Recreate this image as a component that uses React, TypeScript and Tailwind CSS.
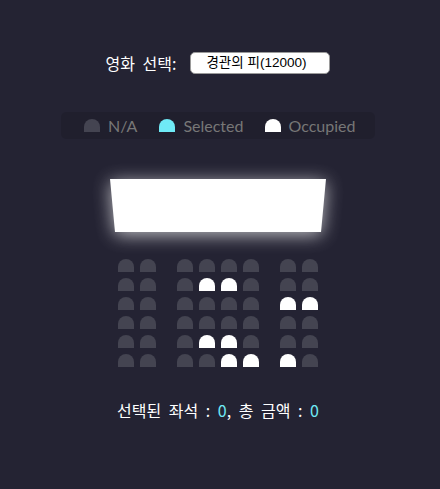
import { useState } from "react";

type SeatState = "na" | "selected" | "occupied";

// 6 rows x 8 seats; aisles after seat 2 and after seat 6
const OCCUPIED: number[][] = [
  [],
  [3, 4],
  [6, 7],
  [],
  [3, 4],
  [4, 5, 6],
];

const seatColor: Record<SeatState, string> = {
  na: "bg-[#444451]",
  selected: "bg-[#6feaf6]",
  occupied: "bg-white",
};

function Seat({ state, className = "" }: { state: SeatState; className?: string }) {
  return <div className={`w-[16px] h-[13px] rounded-t-[10px] ${seatColor[state]} ${className}`} />;
}

export default function App() {
  const [movie, setMovie] = useState("12000");
  const selectedCount = 0;
  const total = selectedCount * Number(movie);

  return (
    <div
      className="min-h-[489px] w-full bg-[#242333] text-white pr-[4px] flex flex-col items-center"
      style={{ fontFamily: '"Lato", "Noto Sans CJK KR", sans-serif' }}
    >
      {/* Movie picker */}
      <div className="mt-[52px] flex items-center h-[22px]">
        <label className="text-[16px] font-['Noto_Sans_CJK_KR',sans-serif] leading-none [word-spacing:4px]">영화 선택:</label>
        <select
          value={movie}
          onChange={e => setMovie(e.target.value)}
          className="ml-[14px] w-[140px] h-[22px] appearance-none bg-white text-black border border-[#9a9a9a] rounded-[5px] pl-[15px] text-[13.5px] leading-none font-['Liberation_Sans','Noto_Sans_CJK_KR',sans-serif]"
        >
          <option value="12000">경관의 피(12000)</option>
          <option value="10000">해피 뉴 이어(10000)</option>
          <option value="9000">킹메이커(9000)</option>
        </select>
      </div>

      {/* Legend */}
      <ul className="mt-[38px] h-[27px] w-[314px] flex items-center gap-[22px] pl-[23px] bg-black/10 rounded-[5px] text-[#777] text-[16px]">
        <li className="flex items-center gap-[8px]">
          <Seat state="na" />
          <small className="text-[16px]">N/A</small>
        </li>
        <li className="flex items-center gap-[8px]">
          <Seat state="selected" />
          <small className="text-[16px]">Selected</small>
        </li>
        <li className="flex items-center gap-[7px]">
          <Seat state="occupied" />
          <small className="text-[16px]">Occupied</small>
        </li>
      </ul>

      {/* Screen */}
      <div className="mt-[40px] drop-shadow-[0_3px_9px_rgba(255,255,255,0.7)]">
        <div className="w-[216px] h-[53px] bg-white [clip-path:polygon(0_0,100%_0,calc(100%-5px)_100%,5px_100%)]" />
      </div>

      {/* Seats */}
      <div className="mt-[27px] flex flex-col gap-[6px]">
        {OCCUPIED.map((occ, r) => (
          <div key={r} className="flex">
            {Array.from({ length: 8 }).map((_, c) => (
              <Seat
                key={c}
                state={occ.includes(c) ? "occupied" : "na"}
                className={c === 1 ? "ml-[3px] mr-[18px]" : c === 6 ? "ml-[18px] mr-[3px]" : "mx-[3px]"}
              />
            ))}
          </div>
        ))}
      </div>

      {/* Summary */}
      <p className="mt-[31px] text-[16px] font-['Noto_Sans_CJK_KR',sans-serif] [word-spacing:4px]">
        선택된 좌석 : <span className="text-[#6feaf6]">{selectedCount}</span>, 총 금액 :{" "}
        <span className="text-[#6feaf6]">{total}</span>
      </p>
    </div>
  );
}
